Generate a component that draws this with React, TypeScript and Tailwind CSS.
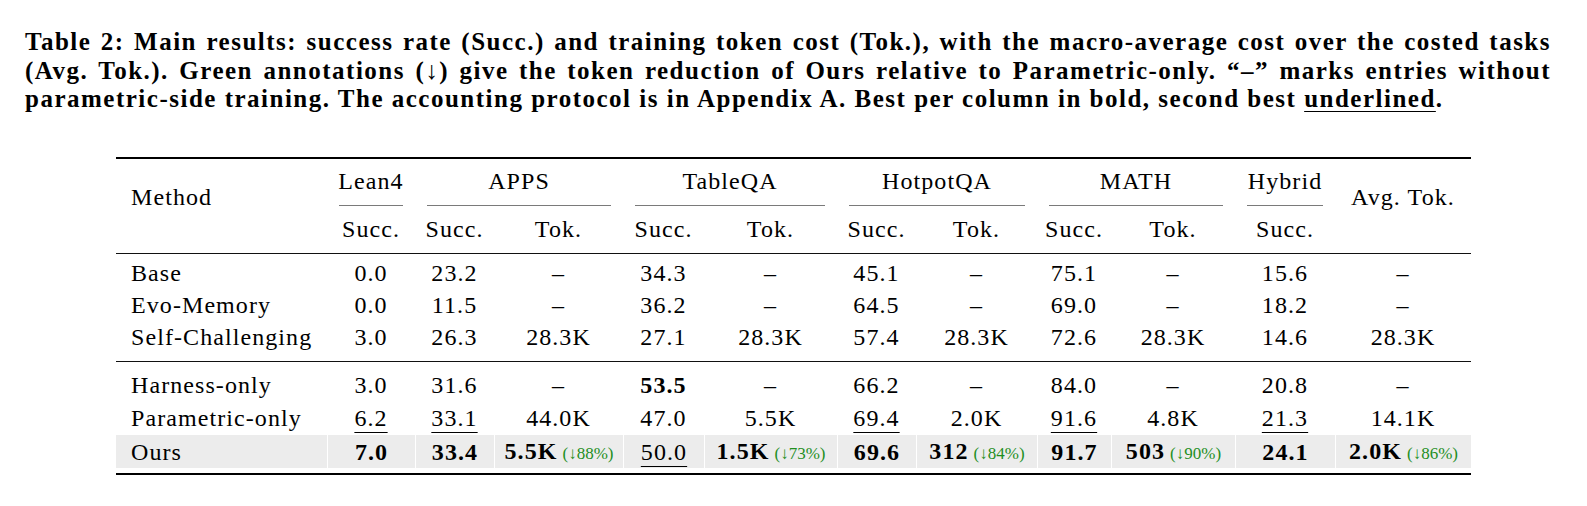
const cols =
  "grid grid-cols-[211px_88px_79px_129px_81px_133px_79px_121px_74px_124px_100px_136px]";

type Cell = { v: string; b?: boolean; u?: boolean; d?: string };

const c = (v: string, b = false, u = false, d?: string): Cell => ({ v, b, u, d });
const dash = c("–");

const group1: [string, Cell[]][] = [
  ["Base", [c("0.0"), c("23.2"), dash, c("34.3"), dash, c("45.1"), dash, c("75.1"), dash, c("15.6"), dash]],
  ["Evo-Memory", [c("0.0"), c("11.5"), dash, c("36.2"), dash, c("64.5"), dash, c("69.0"), dash, c("18.2"), dash]],
  [
    "Self-Challenging",
    [c("3.0"), c("26.3"), c("28.3K"), c("27.1"), c("28.3K"), c("57.4"), c("28.3K"), c("72.6"), c("28.3K"), c("14.6"), c("28.3K")],
  ],
];

const group2: [string, Cell[]][] = [
  ["Harness-only", [c("3.0"), c("31.6"), dash, c("53.5", true), dash, c("66.2"), dash, c("84.0"), dash, c("20.8"), dash]],
  [
    "Parametric-only",
    [
      c("6.2", false, true),
      c("33.1", false, true),
      c("44.0K"),
      c("47.0"),
      c("5.5K"),
      c("69.4", false, true),
      c("2.0K"),
      c("91.6", false, true),
      c("4.8K"),
      c("21.3", false, true),
      c("14.1K"),
    ],
  ],
];

const ours: Cell[] = [
  c("7.0", true),
  c("33.4", true),
  c("5.5K", true, false, "88%"),
  c("50.0", false, true),
  c("1.5K", true, false, "73%"),
  c("69.6", true),
  c("312", true, false, "84%"),
  c("91.7", true),
  c("503", true, false, "90%"),
  c("24.1", true),
  c("2.0K", true, false, "86%"),
];

function Value({ cell }: { cell: Cell }) {
  return (
    <span className="whitespace-nowrap">
      <span
        className={`${cell.b ? "font-bold" : ""} ${
          cell.u ? "underline decoration-[1.2px] underline-offset-[6px]" : ""
        }`}
      >
        {cell.v}
      </span>
      {cell.d && <span className="ml-[5px] text-[17px] tracking-normal text-[#1f8f1f]">(↓{cell.d})</span>}
    </span>
  );
}

function Row({ name, cells, tall, shaded }: { name: string; cells: Cell[]; tall?: boolean; shaded?: boolean }) {
  return (
    <div className={`${cols} ${tall ? "h-[33px]" : "h-[32px]"} ${shaded ? "bg-[#ececec]" : ""} items-center`}>
      <div className="pl-[15px]">{name}</div>
      {cells.map((cell, i) => (
        <div
          key={i}
          className={`flex h-full items-center justify-center ${shaded ? "border-l border-white" : ""}`}
        >
          <Value cell={cell} />
        </div>
      ))}
    </div>
  );
}

export default function App() {
  return (
    <div className="h-[506px] w-[1587px] bg-white font-['Liberation_Serif',serif] text-black">
      {/* Caption */}
      <div className="pl-[25px] pr-[36px] pt-[28px] text-[25px] font-bold leading-[28.5px] tracking-[0.06em]">
        <div className="text-justify [text-align-last:justify]">
          Table 2: Main results: success rate (Succ.) and training token cost (Tok.), with the macro-average cost over
          the costed tasks
        </div>
        <div className="text-justify [text-align-last:justify]">
          (Avg. Tok.). Green annotations (↓) give the token reduction of Ours relative to Parametric-only. “–” marks
          entries without
        </div>
        <div className="whitespace-nowrap">
          parametric-side training. The accounting protocol is in Appendix A. Best per column in bold, second best{" "}
          <span className="underline decoration-[1px] underline-offset-[4px]">underlined</span>.
        </div>
      </div>

      {/* Table */}
      <div className="mx-auto mt-[43px] w-[1355px] text-[24px] leading-[32px] tracking-[0.045em]">
        <div className="h-[2px] bg-black" />

        <div className={`${cols} grid-rows-[32px_16px_32px] pt-[6px]`}>
          <div className="row-span-3 flex items-center pb-[16px] pl-[15px]">Method</div>
          <div className="text-center">Lean4</div>
          <div className="col-span-2 text-center">APPS</div>
          <div className="col-span-2 text-center">TableQA</div>
          <div className="col-span-2 text-center">HotpotQA</div>
          <div className="col-span-2 text-center">MATH</div>
          <div className="text-center">Hybrid</div>
          <div className="row-span-3 flex items-center justify-center pb-[16px]">Avg. Tok.</div>

          <div className="mx-[12px] mt-[8px] h-px bg-[#7a7a7a]" />
          <div className="col-span-2 mx-[12px] mt-[8px] h-px bg-[#7a7a7a]" />
          <div className="col-span-2 mx-[12px] mt-[8px] h-px bg-[#7a7a7a]" />
          <div className="col-span-2 mx-[12px] mt-[8px] h-px bg-[#7a7a7a]" />
          <div className="col-span-2 mx-[12px] mt-[8px] h-px bg-[#7a7a7a]" />
          <div className="mx-[12px] mt-[8px] h-px bg-[#7a7a7a]" />

          <div className="text-center">Succ.</div>
          <div className="text-center">Succ.</div>
          <div className="text-center">Tok.</div>
          <div className="text-center">Succ.</div>
          <div className="text-center">Tok.</div>
          <div className="text-center">Succ.</div>
          <div className="text-center">Tok.</div>
          <div className="text-center">Succ.</div>
          <div className="text-center">Tok.</div>
          <div className="text-center">Succ.</div>
        </div>

        <div className="mt-[8px] h-px bg-[#111]" />

        <div className="pt-[3px]">
          {group1.map(([name, cells]) => (
            <Row key={name} name={name} cells={cells} />
          ))}
        </div>

        <div className="mt-[8px] h-px bg-[#111]" />

        <div className="pt-[7px]">
          {group2.map(([name, cells]) => (
            <Row key={name} name={name} cells={cells} tall />
          ))}
          <Row name="Ours" cells={ours} tall shaded />
        </div>

        <div className="mt-[5px] h-[2px] bg-black" />
      </div>
    </div>
  );
}
